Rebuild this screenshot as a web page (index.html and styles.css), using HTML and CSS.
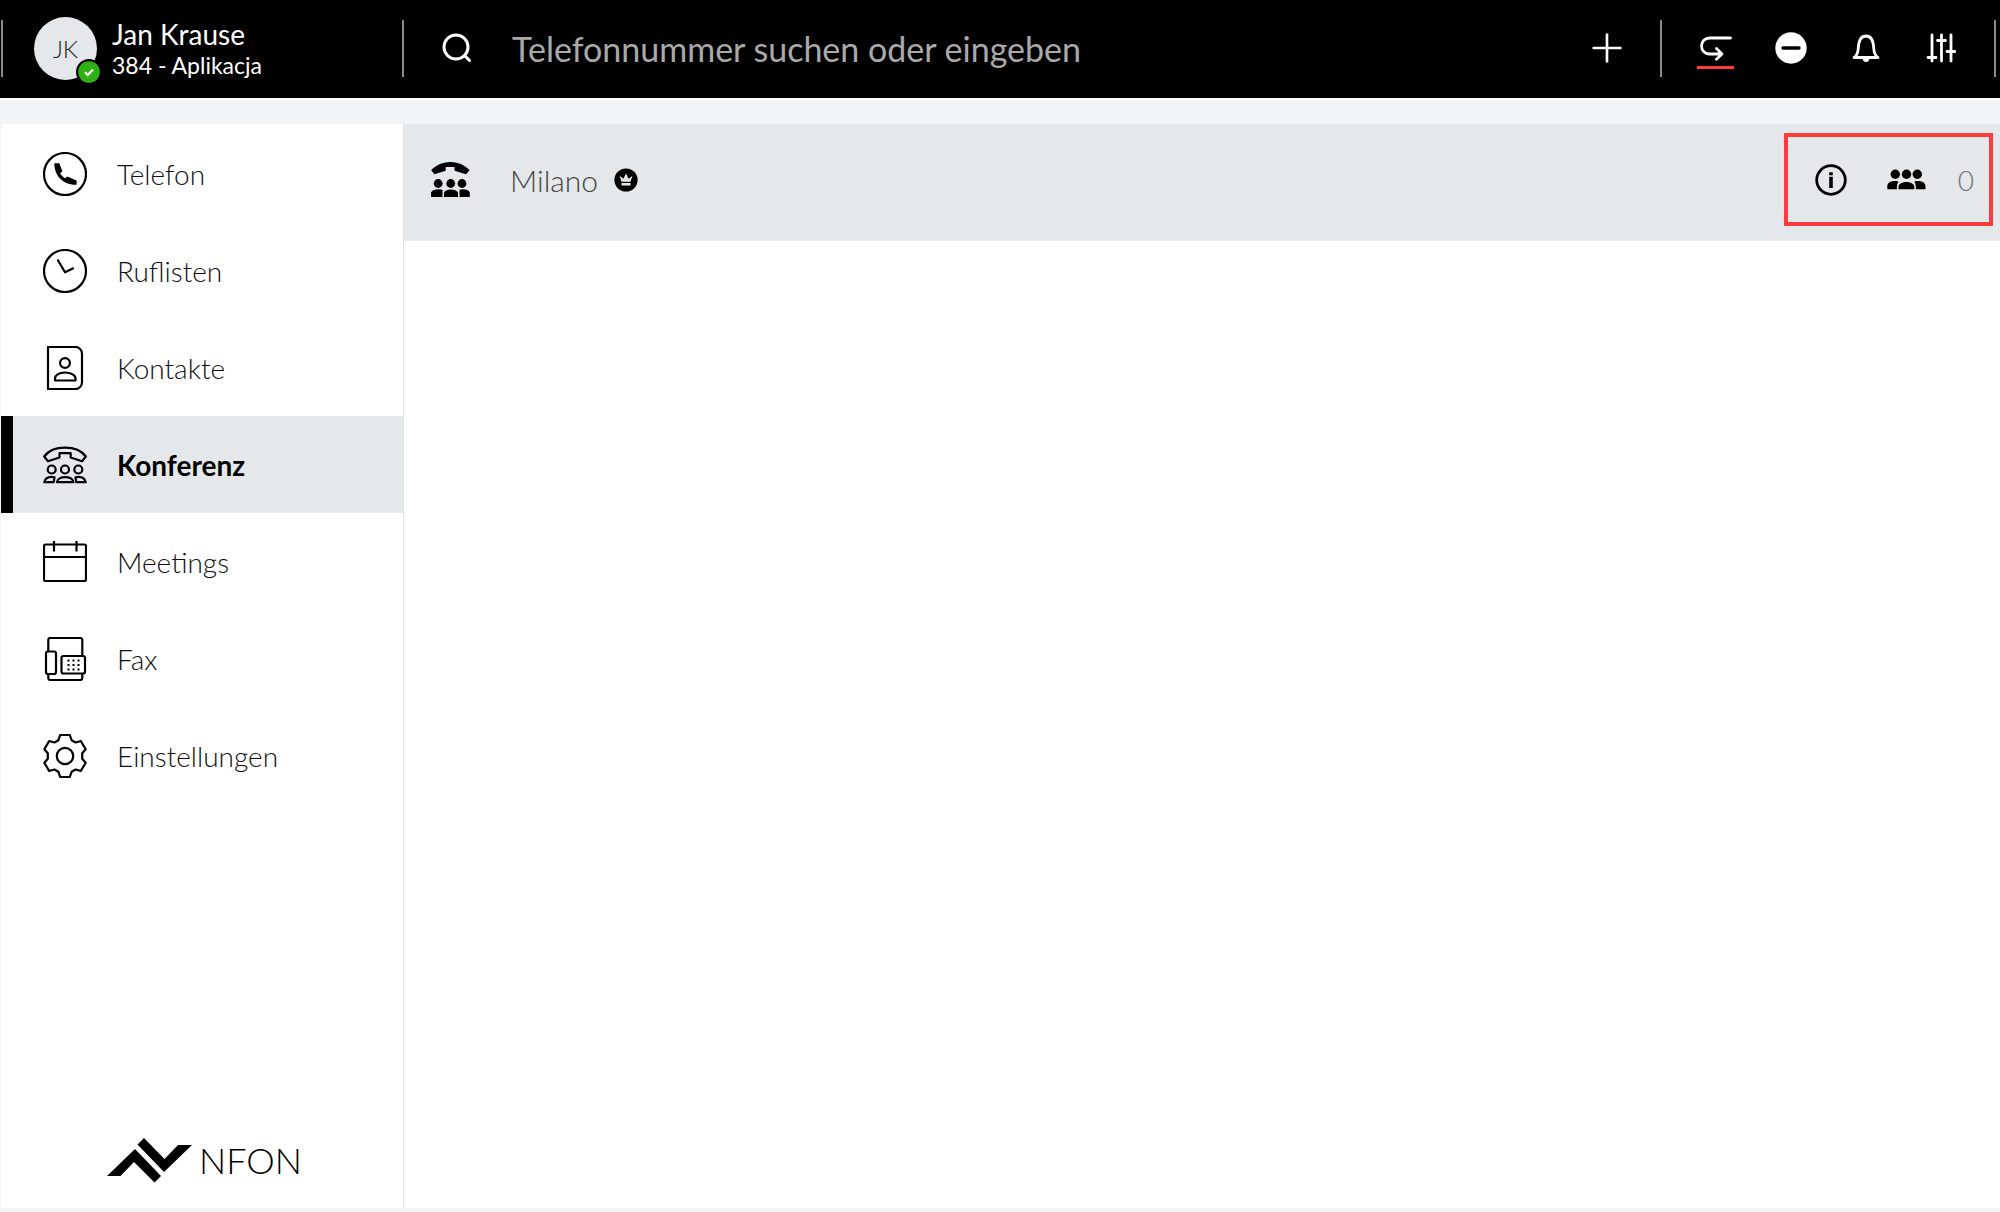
FILE: index.html
```html
<!DOCTYPE html>
<html lang="de">
<head>
  <meta charset="UTF-8">
  <meta name="viewport" content="width=device-width, initial-scale=1.0">
  <title>Konferenz</title>

  <link rel="stylesheet" href="styles.css">
</head>
<body>
  <header class="topbar">
    <span class="divider"></span>
    <div class="profile">
      <div class="avatar">
        JK
        <svg class="status" width="26" height="26" viewBox="0 0 26 26">
          <circle cx="13" cy="13" r="13" fill="#000"/>
          <circle cx="13" cy="13" r="10.8" fill="#2fb115"/>
          <path d="M9 13.3l2.8 2.7 5.2-5.6" fill="none" stroke="#fff" stroke-width="2.2"/>
        </svg>
      </div>
      <div>
        <div class="profile-name">Jan Krause</div>
        <div class="profile-line">384 - Aplikacja</div>
      </div>
    </div>
    <span class="divider"></span>

    <form class="search">
      <button type="submit" class="icon-button" aria-label="Suchen">
        <svg width="30" height="30" viewBox="0 0 30 30" fill="none" stroke="#fff" stroke-width="3" stroke-linecap="round">
          <circle cx="14" cy="14" r="12"/>
          <path d="M22.5 22.5l5 5"/>
        </svg>
      </button>
      <input type="search" class="search-input" aria-label="Telefonnummer" placeholder="Telefonnummer suchen oder eingeben">
    </form>

    <button type="button" class="icon-button tool" aria-label="Neu">
      <svg width="30" height="30" viewBox="0 0 30 30" fill="none" stroke="#fff" stroke-width="2.6">
        <path d="M15 .5v29M.5 15h29"/>
      </svg>
    </button>
    <span class="divider"></span>
    <div class="tools">
      <button type="button" class="icon-button tool forward" aria-label="Rufumleitung">
        <svg width="32" height="26" viewBox="0 0 32 26" fill="none" stroke="#fff" stroke-width="2.8" stroke-linecap="round" stroke-linejoin="round">
          <path d="M30.500 3H9.500a8 8 0 0 0 0 16H21M16.500 13.500l5.500 5.500-5.500 5.200"/>
        </svg>
      </button>
      <button type="button" class="icon-button tool" aria-label="Nicht stören">
        <svg width="32" height="32" viewBox="0 0 32 32">
          <circle cx="16" cy="16" r="15.700" fill="#fff"/>
          <path d="M8 16h16" stroke="#000" stroke-width="3.400" stroke-linecap="round"/>
        </svg>
      </button>
      <button type="button" class="icon-button tool" aria-label="Benachrichtigungen">
        <svg width="28" height="28" viewBox="0 0 28 28">
          <path d="M2 23.500c3.500-2 4-5 4.300-9.500C6.700 6 9 2 14 2s7.300 4 7.700 12c.3 4.500.8 7.500 4.300 9.500z" fill="none" stroke="#fff" stroke-width="2.800" stroke-linejoin="round"/>
          <path d="M10.500 24h7c0 5.200-7 5.200-7 0z" fill="#fff"/>
        </svg>
      </button>
      <button type="button" class="icon-button tool" aria-label="Audio">
        <svg width="30" height="30" viewBox="0 0 30 30" fill="none" stroke="#fff" stroke-width="2.800" stroke-linecap="round">
          <path d="M6 2v26M15.500 2v26M25 2v26M2 24.500h8M11.500 7.500h8M21 18.500h8"/>
        </svg>
      </button>
    </div>
    <span class="divider"></span>
  </header>

  <div class="content">
    <aside class="sidebar">
      <nav class="nav">
        <a href="#telefon" class="nav-item">
          <svg class="nav-icon" viewBox="0 0 44 44">
            <circle cx="22" cy="22" r="21"/>
            <path d="M11.300 11.300h5l3.100 8-2.300 2c1.300 2.200 2.800 3.700 4.900 4.900l2.300-1.700 9.300 4v4.300c-13 .5-22.300-8.500-22.300-21.500z" fill="#000" stroke="none"/>
          </svg>
          Telefon
        </a>
        <a href="#ruflisten" class="nav-item">
          <svg class="nav-icon" viewBox="0 0 44 44">
            <circle cx="22" cy="22" r="21"/>
            <path d="M14.500 10.500L22 23.300l8.800-4.300"/>
          </svg>
          Ruflisten
        </a>
        <a href="#kontakte" class="nav-item">
          <svg class="nav-icon" viewBox="0 0 44 44">
            <path d="M5 1h27.500a6.500 6.500 0 0 1 6.500 6.500v29a6.500 6.500 0 0 1-6.500 6.500H5z"/>
            <circle cx="22" cy="17" r="4.900"/>
            <path d="M12 34.500v-2c0-3 3.500-6 10-6s10.500 3 10.500 6v2z"/>
          </svg>
          Kontakte
        </a>
        <a href="#konferenz" class="nav-item active" aria-current="page">
          <svg class="nav-icon" viewBox="0 0 44 44">
            <path d="M1.200 13.500C6 7 14 4.700 22 4.700s16 2.300 20.800 8.800L39 18.200l-11.300-3.700v-4.300H16.500v4.300L5 18.200z"/>
            <circle cx="8.700" cy="26.500" r="4"/>
            <circle cx="22" cy="26.500" r="4"/>
            <circle cx="35.300" cy="26.500" r="4"/>
            <path d="M11.500 34.300c-5-1-9 .5-10.300 4.900h9.500zM32.500 34.300c5-1 9 .5 10.300 4.900h-9.500zM14 39.200c1-6.700 15-6.700 16.500 0z"/>
          </svg>
          Konferenz
        </a>
        <a href="#meetings" class="nav-item">
          <svg class="nav-icon" viewBox="0 0 44 44">
            <rect x="1" y="4.500" width="42" height="36.500" rx="1.500"/>
            <path d="M1 17h42M11 1v10.500M33.500 1v10.500"/>
          </svg>
          Meetings
        </a>
        <a href="#fax" class="nav-item">
          <svg class="nav-icon" viewBox="0 0 44 44">
            <path d="M5.300 14V3a2 2 0 0 1 2-2h30a2 2 0 0 1 2 2v15M5.300 37v4a2 2 0 0 0 2 2h30a2 2 0 0 0 2-2v-4.500"/>
            <rect x="3" y="14.500" width="10" height="22.500" rx="2"/>
            <rect x="18.500" y="19" width="23.500" height="17.500" rx="2"/>
            <path d="M24.500 23.500h12M24.500 28h12M24.500 32.500h12" stroke-dasharray="2 3"/>
          </svg>
          Fax
        </a>
        <a href="#einstellungen" class="nav-item">
          <svg class="nav-icon" viewBox="0 0 44 44">
            <path d="M17.200 1h9.600l1.800 5.200 4 2.300 5.200-1.500 4.900 8.200-3.500 4v5.600l3.500 4-4.900 8.200-5.200-1.500-4 2.300-1.800 5.200h-9.600l-1.800-5.200-4-2.300-5.200 1.500-4.900-8.200 3.500-4v-5.600l-3.500-4L6.200 7l5.200 1.500 4-2.300z"/>
            <circle cx="22" cy="22" r="8.200"/>
          </svg>
          Einstellungen
        </a>
      </nav>
      <div class="logo">
        <svg width="86" height="45" viewBox="0 0 86 45">
          <path d="M0 38L28 11l26 27-6.500 6.500L27 24 13.500 38zM30.500 6.500L37 0l20.500 21L71 7h14L57 34z"/>
        </svg>
        <span>NFON</span>
      </div>
    </aside>

    <main class="main">
      <div class="room">
        <svg width="39" height="36" viewBox="0 0 39 36">
          <path d="M.2 8.300C10-2.700 29-2.700 38.500 8.300L35 12.300l-11.500-3.500V4.900h-8.800v3.900L3.500 12.300z"/>
          <circle cx="7.200" cy="21.500" r="4.400"/>
          <circle cx="19.700" cy="21.500" r="4.400"/>
          <circle cx="31" cy="21.500" r="4.400"/>
          <path d="M0 35v-4.500c1.500-3 7-4 11.500-2.700V35zM13 35v-4.500c1.800-4 12.200-4 14 0V35zM28.500 35v-7.200c4-1.300 9-.3 10.300 2.700V35z"/>
        </svg>
        <h1 class="room-name">Milano</h1>
        <svg width="24" height="24" viewBox="0 0 24 24">
          <circle cx="12" cy="12" r="11.600"/>
          <path d="M7.500 13.800L5.500 7.800l3.900 3L12 5.500l2.600 5.300 3.900-3-2 6zM7.500 15h9v2.500h-9z" fill="#e4e8eb"/>
        </svg>
        <div class="room-actions">
          <button type="button" class="icon-button" aria-label="Info">
            <svg width="32" height="32" viewBox="0 0 32 32">
              <circle cx="16" cy="16" r="14.300" fill="none" stroke="#000" stroke-width="2.800"/>
              <path d="M14.200 12.700h3.600V24h-3.600zM14.200 8.200h3.600v3h-3.600z"/>
            </svg>
          </button>
          <button type="button" class="icon-button members" aria-label="Teilnehmer: 0">
            <svg width="39" height="21" viewBox="0 0 39 21">
              <circle cx="8.300" cy="5.300" r="4.700"/>
              <circle cx="19.500" cy="5.300" r="4.700"/>
              <circle cx="30.300" cy="5.300" r="4.700"/>
              <path d="M.3 20.300v-3c0-4.500 5.500-6 11.200-4.800-1.300 2-1.600 4-1.600 7.800zM38.500 20.300v-3c0-4.500-5.500-6-11.200-4.800 1.300 2 1.600 4 1.600 7.800zM11.500 20.300v-2.500c0-6.500 15.800-6.500 15.800 0v2.500z"/>
            </svg>
            <span>0</span>
          </button>
        </div>
      </div>
    </main>
  </div>
</body>
</html>
```
FILE: styles.css
```css
* {
  box-sizing: border-box;
}

body {
  display: flex;
  flex-direction: column;
  min-height: 100vh;
  margin: 0;
  background: #f1f5f8;
  color: #000;
  font-family: Lato, sans-serif;
  font-size: 28px;
  font-weight: 300;
}

svg {
  flex: none;
  display: block;
}

.icon-button {
  display: flex;
  align-items: center;
  justify-content: center;
  padding: 0;
  border: 0;
  background: none;
  color: inherit;
  font: inherit;
  cursor: pointer;
}

/* Top bar */
.topbar {
  display: flex;
  align-items: center;
  height: 100px;
  padding: 0 4px 2px 1px;
  border-bottom: 2px solid #fff;
  background: #000;
  color: #fff;
}

.divider {
  flex: none;
  width: 2px;
  height: 57px;
  background: #8a8a8a;
}

.profile {
  display: flex;
  align-items: center;
  gap: 15px;
  flex: none;
  width: 399px;
  padding-left: 31px;
  font-weight: 400;
}

.avatar {
  position: relative;
  display: flex;
  align-items: center;
  justify-content: center;
  width: 63px;
  height: 63px;
  border-radius: 50%;
  background: #e4e8eb;
  color: #222;
  font-size: 24px;
  font-weight: 300;
}

.status {
  position: absolute;
  right: -5px;
  bottom: -5px;
}

.profile-name {
  font-size: 28px;
  line-height: 34px;
}

.profile-line {
  font-size: 23px;
  line-height: 28px;
}

.search {
  display: flex;
  align-items: center;
  gap: 40px;
  flex: 1;
  padding-left: 38px;
}

.search-input {
  flex: 1;
  min-width: 0;
  padding: 0;
  border: 0;
  outline: 0;
  background: none;
  color: #fff;
  font: 400 34px Lato, sans-serif;
}

.search-input::placeholder {
  color: #a9a9a9;
}

.tool {
  width: 75px;
  height: 60px;
}

.tools {
  display: flex;
}

.topbar > .tool,
.tools {
  margin-right: 16px;
}

.tools {
  margin-left: 16px;
}

.forward {
  position: relative;
}

.forward::after {
  content: '';
  position: absolute;
  left: 19px;
  bottom: 9px;
  width: 37px;
  height: 3px;
  background: #ff3b3b;
}

/* Content */
.content {
  display: flex;
  flex: 1;
  margin: 24px 0 4px 1px;
  background: #fff;
}

.sidebar {
  display: flex;
  flex-direction: column;
  flex: none;
  width: 403px;
  border-right: 1px solid #e0e3e6;
}

.nav {
  padding-top: 1px;
}

.nav-item {
  display: flex;
  align-items: center;
  gap: 30px;
  height: 97px;
  padding-left: 42px;
  color: #111;
  text-decoration: none;
}

.nav-item.active {
  padding-left: 30px;
  border-left: 12px solid #000;
  background: #e4e8eb;
  color: #000;
  font-weight: 700;
}

.nav-icon {
  width: 44px;
  height: 44px;
  fill: none;
  stroke: #000;
  stroke-width: 2.2;
  stroke-linejoin: round;
}

.logo {
  display: flex;
  align-items: center;
  gap: 6px;
  margin-top: auto;
  padding: 0 0 24px 106px;
  font-size: 36px;
  line-height: 48px;
}

.main {
  flex: 1;
}

.room {
  display: flex;
  align-items: center;
  height: 117px;
  padding: 9px 7px 15px 27px;
  background: #e4e8eb;
}

.room-name {
  margin: 0 16px 0 40px;
  color: #444;
  font-size: 30px;
  font-weight: 300;
}

/* Highlighted room controls */
.room-actions {
  display: flex;
  align-items: center;
  align-self: stretch;
  gap: 40px;
  margin-left: auto;
  padding: 0 15px 0 27px;
  border: 4px solid #ff3b3b;
}

.members {
  gap: 32px;
  color: #777;
}
```
